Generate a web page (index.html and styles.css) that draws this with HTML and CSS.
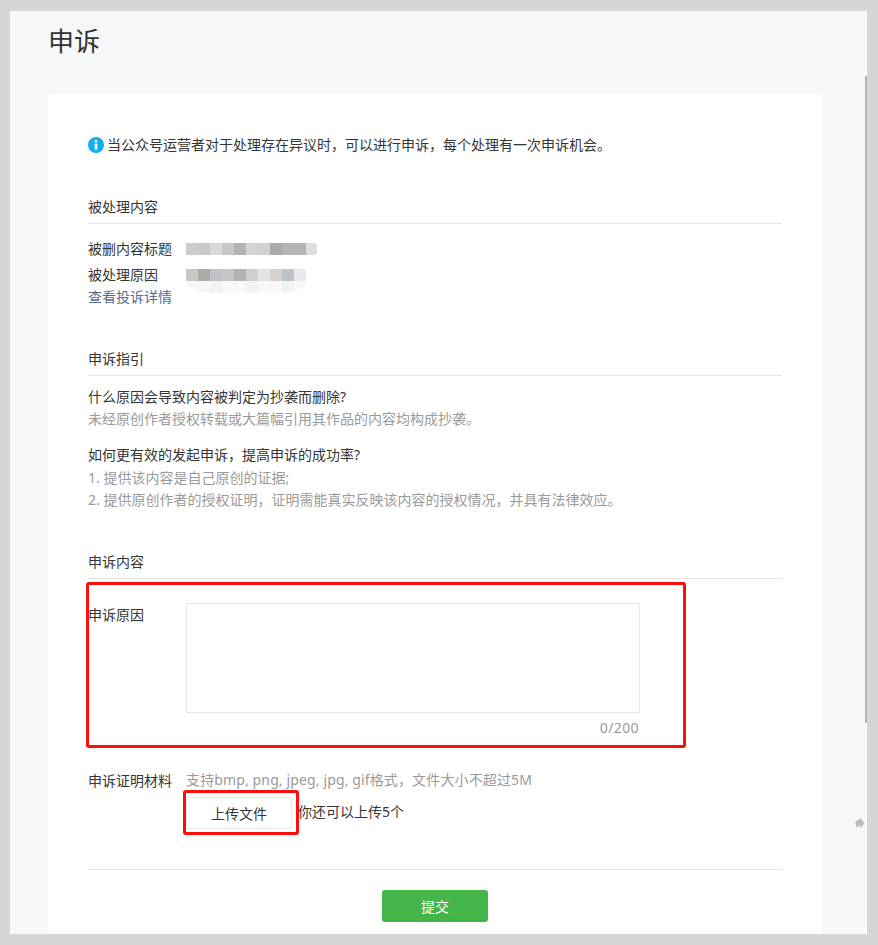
FILE: index.html
```html
<!DOCTYPE html>
<html lang="zh-CN">
<head>
<meta charset="utf-8">
<title>申诉</title>
<link rel="stylesheet" href="styles.css">
</head>
<body>
<div class="frame">
  <div class="scrollbar"><div class="thumb"></div></div>
  <main class="page">
    <h1 class="title">申诉</h1>
    <div class="card">
      <p class="notice">
        <svg class="info" viewBox="0 0 16 16" width="16" height="16"><circle cx="8" cy="8" r="8" fill="#10aeef"/><rect x="6.7" y="6.6" width="2.6" height="6.2" fill="#fff"/><rect x="6.7" y="3.2" width="2.6" height="2.4" fill="#fff"/></svg>
        <span>当公众号运营者对于处理存在异议时，可以进行申诉，每个处理有一次申诉机会。</span>
      </p>

      <section class="sec sec-a">
        <h2 class="sec-title">被处理内容</h2>
        <div class="kv kv-1">
          <span class="k">被删内容标题</span>
          <div class="mosaic">
            <i class="px c1"></i><i class="px c2"></i><i class="px c3"></i><i class="px c4"></i><i class="px c5"></i><i class="px c6"></i><i class="px c7"></i><i class="px c8"></i><i class="px c9"></i><i class="px c9"></i><i class="px c10 end"></i>
          </div>
        </div>
        <div class="kv kv-2">
          <span class="k">被处理原因</span>
          <div class="mosaic-stack">
            <div class="mosaic">
              <i class="px c4"></i><i class="px c8"></i><i class="px c11"></i><i class="px c4"></i><i class="px c5"></i><i class="px c12"></i><i class="px c13"></i><i class="px c14"></i><i class="px c11"></i><i class="px c15"></i>
            </div>
            <div class="mosaic fade">
              <i class="px f1"></i><i class="px f1"></i><i class="px f2"></i><i class="px f3"></i><i class="px f3"></i><i class="px f2"></i><i class="px f3"></i><i class="px f3"></i><i class="px f2"></i><i class="px f3"></i>
            </div>
          </div>
        </div>
        <a class="link" href="#">查看投诉详情</a>
      </section>

      <section class="sec sec-b">
        <h2 class="sec-title">申诉指引</h2>
        <p class="q q-1">什么原因会导致内容被判定为抄袭而删除?</p>
        <p class="a">未经原创作者授权转载或大篇幅引用其作品的内容均构成抄袭。</p>
        <p class="q q-2">如何更有效的发起申诉，提高申诉的成功率?</p>
        <p class="a a-first">1. 提供该内容是自己原创的证据;</p>
        <p class="a">2. 提供原创作者的授权证明，证明需能真实反映该内容的授权情况，并具有法律效应。</p>
      </section>

      <section class="sec sec-c">
        <h2 class="sec-title">申诉内容</h2>
        <div class="field">
          <label class="field-label">申诉原因</label>
          <div class="field-body">
            <div class="textarea"></div>
            <div class="count">0/200</div>
          </div>
        </div>
        <div class="field field-file">
          <label class="field-label">申诉证明材料</label>
          <div class="field-body">
            <div class="hint">支持bmp, png, jpeg, jpg, gif格式，文件大小不超过5M</div>
            <div class="upload-row">
              <button class="btn-upload" type="button">上传文件</button>
              <span class="remain">你还可以上传5个</span>
            </div>
          </div>
        </div>
      </section>

      <div class="actions">
        <button class="btn-submit" type="button">提交</button>
      </div>
    </div>
  </main>
  <svg class="puzzle" viewBox="0 0 10 10" width="10" height="10"><path d="M4 0.4h2v1.4l2.6.8-.5 1.8 1.5.6-.4 1.9-1.7-.3-.5 2.6H5.2V7.4H3.8v1.3H1.1V6.3H0.3V4.2h1V2.2H4z" fill="#b9b9b9"/></svg>
  <div class="mark mark-reason"></div>
  <div class="mark mark-upload"></div>
</div>
</body>
</html>
```
FILE: styles.css
```css
* { box-sizing: border-box; }
html, body { margin: 0; height: 100%; }
body {
  background: #d6d6d6;
  padding: 11px 11px 11px 10px;
  overflow: hidden;
  font-family: "Noto Sans", "Noto Sans CJK SC", sans-serif;
  font-size: 14px;
  color: #353535;
}
.frame {
  position: relative;
  width: 857px;
  height: 923px;
  background: #f6f7f9;
  overflow: hidden;
}
.scrollbar {
  position: absolute;
  top: 0; right: 0; bottom: 0;
  width: 2px;
  background: #fff;
}
.thumb {
  margin-top: 65px;
  height: 647px;
  background: #b4b4b4;
}
.page { padding: 0 45px 0 38px; }
.title {
  margin: 0;
  padding-top: 10px;
  height: 83px;
  font-size: 26px;
  line-height: 40px;
  font-weight: 400;
  color: #333;
}
.card {
  background: #fff;
  border-radius: 4px;
  width: 774px;
  padding: 40px 40px 12px;
  height: 860px;
}
p { margin: 0; }
.notice {
  display: flex;
  align-items: center;
  gap: 3px;
  height: 22px;
  line-height: 22px;
}
.info { flex: none; }
.sec-title {
  margin: 0;
  height: 29px;
  line-height: 24px;
  font-size: 14px;
  font-weight: 400;
  border-bottom: 1px solid #e6e6e6;
  color: #353535;
}
.sec-a { margin-top: 39px; }
.sec-b { margin-top: 39px; }
.sec-c { margin-top: 39px; }
.kv { display: flex; align-items: flex-start; line-height: 22px; }
.kv-1 { margin-top: 14px; height: 26px; }
.kv-2 { height: 22px; }
.k { width: 98px; flex: none; }
.mosaic { display: flex; height: 12px; }
.kv .mosaic { margin-top: 5px; }
.kv .fade { margin-top: 0; border-radius: 0 0 30px 30px / 0 0 10px 10px; overflow: hidden; }
.mosaic-stack { display: flex; flex-direction: column; }
.px { display: block; width: 12px; height: 12px; }
.px.end { width: 11px; border-radius: 0 3px 3px 0; }
.c1 { background: #cfccca; } .c2 { background: #c6cacb; } .c3 { background: #d9dad9; }
.c4 { background: #c7c7c6; } .c5 { background: #b3b3b5; } .c6 { background: #d4d4d5; }
.c7 { background: #d0d2d2; } .c8 { background: #aeaaa7; } .c9 { background: #b3b4b3; }
.c10 { background: #dcdfdf; } .c11 { background: #bfc2c6; } .c12 { background: #cfced1; }
.c13 { background: #e3e3e4; } .c14 { background: #d5d2cc; } .c15 { background: #e9eaeb; }
.f1 { background: #f7f7f7; } .f2 { background: #f1f2f2; } .f3 { background: #f8f8f8; }
.link {
  display: block;
  line-height: 22px;
  color: #576b95;
  text-decoration: none;
}
.q { line-height: 22px; color: #353535; }
.q-1 { margin-top: 10px; }
.q-2 { margin-top: 14px; }
.a { line-height: 22px; color: #9a9a9a; }
.a-first { margin-top: 1px; }
.field { display: flex; }
.sec-c .field:first-of-type { margin-top: 24px; }
.field-label { width: 98px; flex: none; line-height: 24px; color: #353535; }
.field-body { flex: none; width: 454px; }
.textarea {
  height: 110px;
  border: 1px solid #e4e8eb;
  background: #fff;
}
.count { text-align: right; padding-right: 1px; margin-top: 4px; line-height: 22px; color: #9a9a9a; letter-spacing: .4px; }
.field-file { margin-top: 30px; }
.field-file .field-label { line-height: 22px; padding-top: 1px; }
.hint { white-space: nowrap; line-height: 22px; color: #9a9a9a; letter-spacing: .13px; }
.upload-row { display: flex; align-items: center; gap: 6px; margin-top: 6px; }
.btn-upload {
  width: 106px;
  height: 32px;
  background: #fff;
  border: 1px solid #e4e8eb;
  border-radius: 3px;
  font: inherit;
  color: #353535;
}
.remain { line-height: 30px; margin-bottom: 2px; }
.actions {
  margin-top: 40px;
  padding-top: 20px;
  border-top: 1px solid #e6e6e6;
  display: flex;
  justify-content: center;
}
.btn-submit {
  width: 106px;
  height: 32px;
  background: #44b549;
  border: 0;
  border-radius: 3px;
  color: #fff;
  font: inherit;
}
.puzzle { position: absolute; left: 845px; top: 807px; }
.mark {
  position: absolute;
  border: 3px solid #fb0f0c;
  border-radius: 3px;
}
.mark-reason { left: 76px; top: 571px; width: 600px; height: 166px; }
.mark-upload { left: 173px; top: 779px; width: 116px; height: 45px; }
```
